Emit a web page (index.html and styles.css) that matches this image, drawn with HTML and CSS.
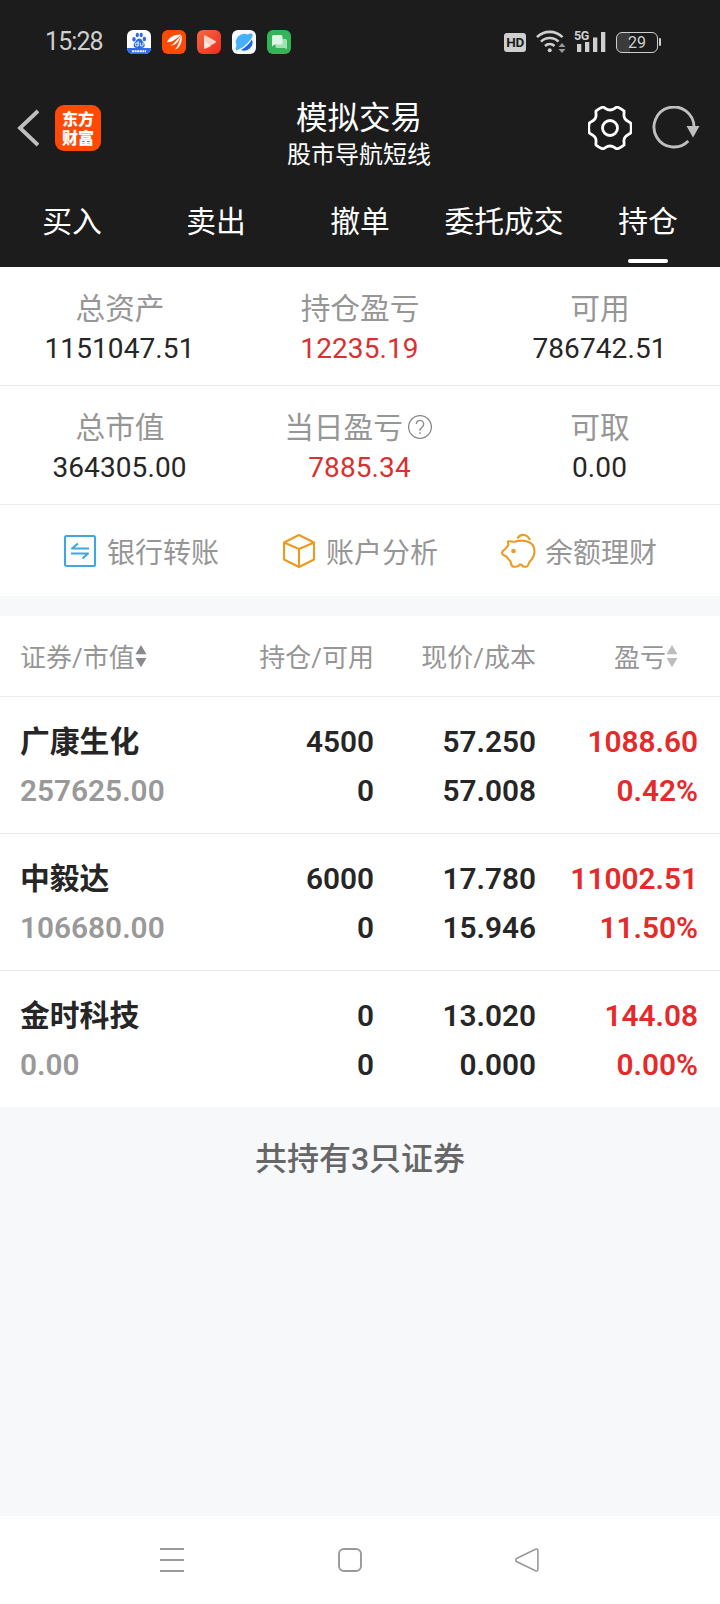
FILE: index.html
```html
<!DOCTYPE html>
<html lang="zh-CN">
<head>
<meta charset="utf-8">
<title>模拟交易</title>
<link rel="stylesheet" href="styles.css">
</head>
<body>
<div class="screen">
  <header class="top">
    <div class="status">
      <span class="clock">15:28</span>
      <div class="apps">
        <svg class="app" viewBox="0 0 24 24"><rect width="24" height="24" rx="6" fill="#fff"/><path d="M0 18h24a6 6 0 0 1-6 6H6a6 6 0 0 1-6-6z" fill="#2f6be8"/><g fill="#2a6be0"><ellipse cx="7" cy="9.3" rx="1.7" ry="2.3"/><ellipse cx="10.3" cy="5" rx="1.6" ry="2.3"/><ellipse cx="14.2" cy="5" rx="1.6" ry="2.3"/><ellipse cx="17.4" cy="9" rx="1.7" ry="2.3"/><path d="M12.3 8.6c2.3 0 2.8 2.3 4.2 3.8 2.300 2.300 1.200 5.600-1.700 5.500H9.600c-2.900 0-4-3.200-1.700-5.500 1.400-1.500 2-3.800 4.400-3.800z"/></g><path d="M11.200 11v5H9.800a1.500 1.500 0 0 1 0-3h1.400M13.300 12.800v2a1.300 1.300 0 0 0 2.700 0v-2" fill="none" stroke="#fff" stroke-width="1"/><path d="M5 21.300h14" stroke="#fff" stroke-width="2" stroke-dasharray="2 .6"/></svg>
        <svg class="app" viewBox="0 0 24 24"><rect width="24" height="24" rx="6" fill="#ff4a05"/><g fill="#fff"><path d="M5 12.300C6.500 8 11 4.500 19.500 4.500 15.500 7 12 12.500 5 12.300z"/><path d="M8.500 15.800C13 13.500 15 9 19.500 4.800 17.500 9 15.500 15.500 8.500 15.800z"/><path d="M13 19.500c3.500-3.500 4.500-9.500 6.600-14.200C20.500 11 18.500 18 13 19.500z"/></g></svg>
        <svg class="app" viewBox="0 0 24 24"><defs><linearGradient id="vid" x1="0" y1="0" x2="1" y2="1"><stop stop-color="#f36a40"/><stop offset="1" stop-color="#ee2b20"/></linearGradient></defs><rect width="24" height="24" rx="6" fill="url(#vid)"/><path d="M7 6.300q0-1.600 1.500-.8l10 5.600q1.200.8 0 1.600l-10 5.700Q7 19 7 17.500z" fill="#ffd0c4"/><path d="M7 10l7 6.500-5.500 2Q7 19 7 17.500z" fill="#fff" opacity=".5"/></svg>
        <svg class="app" viewBox="0 0 24 24"><rect width="24" height="24" rx="6" fill="#f5f8fc"/><path d="M4 20.500Q2.800 18.500 4.600 15.500A8.300 8.300 0 0 1 15.500 4.600Q19 3 20.300 4q1 2-1.500 5.500Q12 18 4 20.500z" fill="#46b0fb"/><path d="M20 9.500A8.300 8.300 0 0 1 9 20Q16 16 20 9.500z" fill="#1b62e6"/></svg>
        <svg class="app" viewBox="0 0 24 24"><rect width="24" height="24" rx="6" fill="#34b458"/><path d="M10 9h8.500q1.500 0 1.500 1.500V19l-2.500-1H10q-1.500 0-1.500-1.500v-6Q8.500 9 10 9z" fill="#a5dfb4"/><path d="M6.500 5H14q1.500 0 1.500 1.500V13q0 1.500-1.500 1.500H7.500L5 16.500v-10Q5 5 6.500 5z" fill="#e0f6e5"/></svg>
      </div>
      <div class="signals">
        <span class="hd">HD</span>
        <svg class="wifi" viewBox="0 0 30 24"><g fill="none" stroke="#cfcfcf" stroke-width="2.600"><path d="M1 7.200a18 18 0 0 1 25.500 0"/><path d="M5 11.600a12.300 12.300 0 0 1 17.500 0"/><path d="M9 16a6.800 6.800 0 0 1 9.500 0"/></g><circle cx="13.700" cy="20.300" r="2" fill="#cfcfcf"/><path d="M22.500 17l3.500-4 3.500 4zM22.500 19l3.500 4 3.500-4z" fill="#999"/></svg>
        <div class="cell"><span class="gen">5G</span><svg viewBox="0 0 32 24"><path d="M3 14h4.300v8H3zM11 12h4.300v10H11zM19 7.500h4.300V22H19zM27 2h4.300v20H27z" fill="#cfcfcf"/></svg></div>
        <div class="battery"><span>29</span></div>
      </div>
    </div>
    <div class="titlebar">
      <div class="left">
        <svg class="back" viewBox="0 0 22 38"><path d="M21 2L3 19 21 36" fill="none" stroke="#bfbfbf" stroke-width="3.800"/></svg>
        <div class="brand">东方<br>财富</div>
      </div>
      <div class="heading"><h1>模拟交易</h1><p>股市导航短线</p></div>
      <div class="right">
        <svg class="gear" viewBox="0 0 44 44"><path d="M22 4c3.500 0 4.500-2 7-3 2.600.8 5 2.200 7 4 .5 2.700-1 4.500.8 7.500 1.700 3 4 2.800 6 4.800.6 3.100.6 6.300 0 9.400-2 2-4.300 1.800-6 4.800-1.800 3-.3 4.800-.8 7.500-2 1.800-4.400 3.200-7 4-2.500-1-3.500-3-7-3s-4.500 2-7 3c-2.600-.8-5-2.200-7-4-.5-2.700 1-4.500-.8-7.500-1.700-3-4-2.800-6-4.800-.6-3.100-.6-6.300 0-9.400 2-2 4.300-1.800 6-4.800C9 9.500 7.500 7.700 8 5c2-1.800 4.400-3.200 7-4 2.500 1 3.500 3 7 3z"/><circle cx="22" cy="22" r="7.500"/></svg>
        <svg class="reload" viewBox="0 0 48 44"><path d="M36.300 35A20 20 0 1 1 42 21" fill="none" stroke="#bfbfbf" stroke-width="2.900"/><path d="M34.500 20h13L41 31.500z" fill="#bfbfbf"/></svg>
      </div>
    </div>
    <nav class="tabs"><span>买入</span><span>卖出</span><span>撤单</span><span>委托成交</span><span class="active">持仓</span></nav>
  </header>
  <section class="summary">
    <div class="stat"><label>总资产</label><b>1151047.51</b></div>
    <div class="stat"><label>持仓盈亏</label><b class="up">12235.19</b></div>
    <div class="stat"><label>可用</label><b>786742.51</b></div>
  </section>
  <section class="summary">
    <div class="stat"><label>总市值</label><b>364305.00</b></div>
    <div class="stat"><label class="today">当日盈亏<svg class="help" viewBox="0 0 24 24"><circle cx="12" cy="12" r="11.400"/><path d="M8.300 9a3.700 3.700 0 1 1 6 3c-1.500 1.200-2.300 1.800-2.300 3.700M12 17.300v1.700"/></svg></label><b class="up">7885.34</b></div>
    <div class="stat"><label>可取</label><b>0.00</b></div>
  </section>
  <section class="actions">
    <div class="action"><svg class="ico" viewBox="0 0 34 36" stroke="#3fa6e0"><rect x="2" y="3" width="30" height="30" rx="1.500"/><path d="M26 15.500H9L15 10.500M8 20.500h17L19.500 25.500"/></svg>银行转账</div>
    <div class="action"><svg class="ico" viewBox="0 0 34 36" stroke="#ec9a22"><path d="M17 2l15 7.500v17L17 34 2 26.500v-17zM2 9.500L17 16l15-6.500M17 16v18"/></svg>账户分析</div>
    <div class="action"><svg class="ico" viewBox="0 0 34 36" stroke="#ec9a22"><path d="M7 8.500c-.3 1.200.7 2.300.3 3.500C5.500 14 4.500 16.500 2.500 17.500c-2 1-1.800 3.800 0 4.500 2 .8 3.500 1.500 4.500 3.500.8 1.500 2.500 2 2.800 4 .3 2.300 1 4 3 4.200 2 .2 4.500.3 5.200-1.500.5-1 2.500-1 3 0 .8 1.800 3 1.800 5 1.300 1.800-.5 1.300-3.500 2.800-5 2.500-2.500 4.700-5.500 4.700-10 0-6-3.500-9.500-9-10.500-3.500-.6-7-.5-10 .5C11.500 9.500 9.500 7.500 7 8.500z"/><path d="M16.500 5.500c3-5.500 10-4.500 12.500 1.500"/><circle cx="12.500" cy="18" r="1.300" fill="#ec9a22"/></svg>余额理财</div>
  </section>
  <section class="table">
    <div class="row head">
      <div class="c1">证券/市值<svg class="sort" viewBox="0 0 12 24"><path d="M.5 10.300L6 1l5.500 9.300zM.5 14L6 23.300 11.500 14z" fill="#8a8a8d"/></svg></div>
      <div class="c2">持仓/可用</div><div class="c3">现价/成本</div>
      <div class="c4">盈亏<svg class="sort" viewBox="0 0 12 24"><path d="M.5 10.300L6 1l5.500 9.300zM.5 14L6 23.300 11.500 14z" fill="#bdbdc0"/></svg></div>
    </div>
    <div class="row"><div class="c1"><b>广康生化</b><i>257625.00</i></div><div class="c2"><b>4500</b><b>0</b></div><div class="c3"><b>57.250</b><b>57.008</b></div><div class="c4"><b>1088.60</b><b>0.42%</b></div></div>
    <div class="row"><div class="c1"><b>中毅达</b><i>106680.00</i></div><div class="c2"><b>6000</b><b>0</b></div><div class="c3"><b>17.780</b><b>15.946</b></div><div class="c4"><b>11002.51</b><b>11.50%</b></div></div>
    <div class="row"><div class="c1"><b>金时科技</b><i>0.00</i></div><div class="c2"><b>0</b><b>0</b></div><div class="c3"><b>13.020</b><b>0.000</b></div><div class="c4"><b>144.08</b><b>0.00%</b></div></div>
  </section>
  <p class="total">共持有3只证券</p>
  <footer class="sysnav">
    <svg viewBox="0 0 24 24"><path d="M0 1h24M0 12h24M0 23h24"/></svg>
    <svg viewBox="0 0 24 24"><rect x="1" y="1" width="22" height="22" rx="5"/></svg>
    <svg viewBox="0 0 24 24"><path d="M1.500 10.500L20.500 1.200q2.400-.8 2.400 1.500v18.600q0 2.300-2.400 1.500L1.500 13.500q-1.500-1.500 0-3z" stroke-width="1.600"/></svg>
  </footer>
</div>
</body>
</html>
```
FILE: styles.css
```css
* { box-sizing: border-box; margin: 0; padding: 0; }
body { background: #f7f8fa; font-family: Roboto, "Noto Sans CJK SC", sans-serif; color: #262626; }
svg { display: block; flex: none; }
b, i, h1 { font-style: normal; font-weight: 400; }
.screen { width: 720px; height: 1604px; display: flex; flex-direction: column; overflow: hidden; }

.top { height: 267px; background: #1c1c1c; color: #fff; flex: none; }
.status { height: 83px; padding: 1px 59px 0 45px; display: flex; align-items: center; color: #cfcfcf; }
.clock { width: 82px; font-size: 25px; line-height: 30px; letter-spacing: -.9px; }
.apps { display: flex; gap: 11px; }
.app { width: 24px; height: 24px; }
.signals { margin-left: auto; display: flex; align-items: center; }
.hd { width: 22px; height: 19px; border-radius: 3px; background: #cfcfcf; color: #1c1c1c; font-size: 13.500px; line-height: 19px; font-weight: 700; text-align: center; letter-spacing: -.5px; }
.wifi { width: 30px; height: 24px; margin-left: 10px; }
.cell { position: relative; width: 32px; height: 24px; margin-left: 8px; }
.cell svg { width: 32px; height: 24px; }
.gen { position: absolute; left: 0; top: 0; font-size: 12.500px; line-height: 12px; font-weight: 700; background: #1c1c1c; letter-spacing: -.3px; }
.battery { position: relative; width: 42px; height: 21px; margin: 0 3px 0 10px; border: 1.500px solid #cfcfcf; border-radius: 6px; background: linear-gradient(90deg, #3b3b3b 13px, transparent 13px); text-align: center; font-size: 16px; line-height: 19px; }
.battery::after { content: ""; position: absolute; right: -4px; top: 5px; width: 2px; height: 8px; background: #cfcfcf; border-radius: 1px; }

.titlebar { height: 90px; display: grid; grid-template-columns: 1fr auto 1fr; align-items: center; padding: 0 20px 0 17px; }
.left, .right { display: flex; align-items: center; }
.right { justify-content: flex-end; gap: 20px; }
.back { width: 22px; height: 38px; }
.brand { width: 46px; height: 46px; margin-left: 16px; padding-top: 4px; border-radius: 9px; background: #ff4a05; text-align: center; font: 900 16px/19px "Noto Sans CJK SC", sans-serif; }
.heading { text-align: center; padding: 15px 0 0 1px; }
.heading h1 { font-size: 31.500px; line-height: 38px; }
.heading p { font-size: 24px; line-height: 34px; }
.gear { width: 44px; height: 44px; fill: none; stroke: #fff; stroke-width: 2.800; }
.reload { width: 48px; height: 44px; }
.tabs { height: 94px; display: grid; grid-template-columns: repeat(5, 144px); text-align: center; font-size: 29.800px; line-height: 98px; }
.active { position: relative; height: 94px; }
.active::after { content: ""; position: absolute; left: 52px; bottom: 4px; width: 40px; height: 4px; border-radius: 2px; background: #fff; }

.summary { height: 119px; flex: none; background: #fff; border-bottom: 1px solid #ebebeb; display: grid; grid-template-columns: repeat(3, 240px); padding-top: 22px; }
.stat { display: flex; flex-direction: column; align-items: center; }
.stat label { display: flex; align-items: center; font-size: 29.700px; line-height: 40px; height: 40px; color: #969696; }
.stat .today { padding-right: 4px; }
.stat b { font-size: 28px; line-height: 40px; letter-spacing: .1px; margin-right: 1px; }
.stat .up { color: #dc2f2f; }
.help { width: 24px; height: 24px; margin: -3px 0 0 5px; fill: none; stroke: #888; stroke-width: 1.300; }
.actions { height: 91px; flex: none; background: #fff; display: flex; padding: 0 63px; justify-content: space-between; align-items: center; }
.action { display: flex; align-items: center; gap: 10px; font-size: 28px; color: #969696; }
.ico { width: 34px; height: 36px; fill: none; stroke-width: 2.100; stroke-linejoin: round; overflow: visible; }

.table { margin-top: 20px; background: #fff; flex: none; }
.row { height: 137px; display: grid; grid-template-columns: 201px 153px 162px 162px; padding: 20px 22px 0 20px; border-bottom: 1px solid #ebebeb; }
.row:last-child { border: 0; height: 136px; }
.row > div { display: flex; flex-direction: column; text-align: right; }
.row b, .row i { font-size: 29.800px; line-height: 49px; height: 49px; font-weight: 600; }
.row .c1 { text-align: left; }
.row i { color: #999; }
.row .c4 b { color: #e62a2a; }
.row.head { height: 81px; padding: 0 22px 1px 20px; align-items: center; font-size: 26px; color: #969696; }
.row.head > div { display: flex; flex-direction: row; align-items: center; justify-content: flex-end; }
.row.head .c1 { justify-content: flex-start; }
.row.head .c4 { padding-right: 20px; }
.sort { width: 12px; height: 24px; }
.total { text-align: center; font-size: 32px; line-height: 44px; font-weight: 500; margin-top: 30px; color: #666; }
.sysnav { margin-top: auto; height: 88px; background: #fff; display: flex; gap: 154px; padding: 0 0 0 160px; align-items: center; }
.sysnav svg { width: 24px; height: 24px; fill: none; stroke: #999; stroke-width: 1.900; stroke-linecap: round; }
.sysnav svg:last-child { margin-left: -1px; }
```
